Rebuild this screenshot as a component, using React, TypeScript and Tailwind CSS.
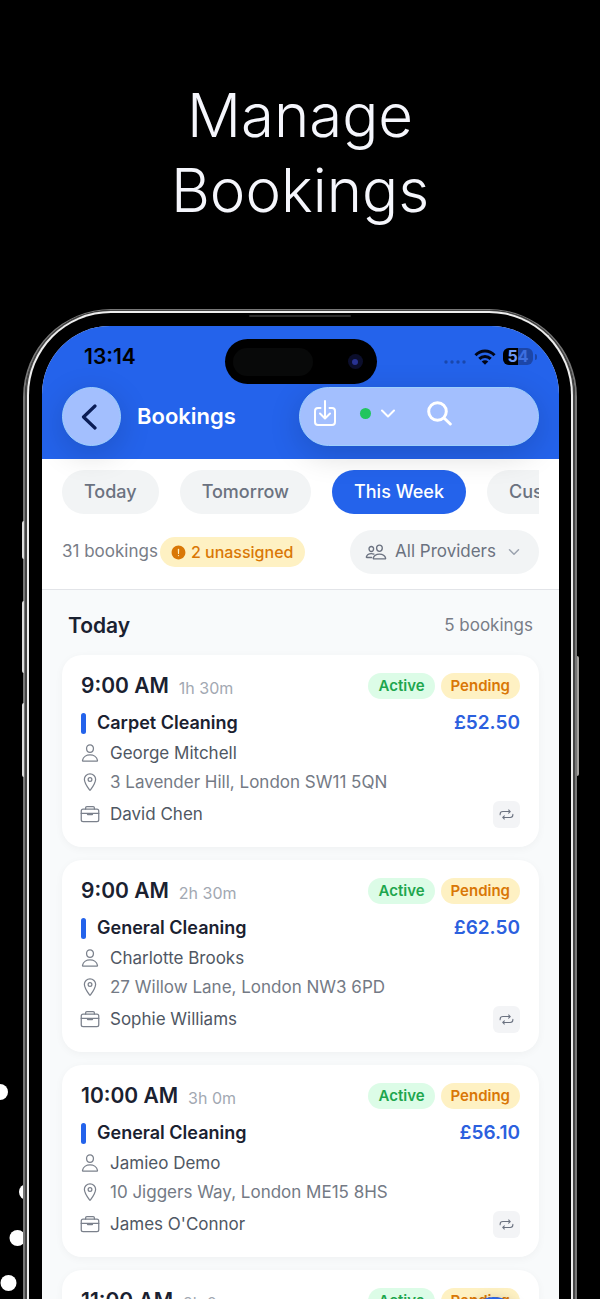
import React from 'react';
import {
  IoAlertCircle,
  IoBriefcaseOutline,
  IoChevronDownOutline,
  IoLocationOutline,
  IoPeopleOutline,
  IoPersonOutline,
  IoRepeatOutline,
} from 'react-icons/io5';

const tabs = ['Today', 'Tomorrow', 'This Week', 'Custom'];

const bookings = [
  { time: '9:00 AM', duration: '1h 30m', service: 'Carpet Cleaning', price: '£52.50', client: 'George Mitchell', address: '3 Lavender Hill, London SW11 5QN', provider: 'David Chen' },
  { time: '9:00 AM', duration: '2h 30m', service: 'General Cleaning', price: '£62.50', client: 'Charlotte Brooks', address: '27 Willow Lane, London NW3 6PD', provider: 'Sophie Williams' },
  { time: '10:00 AM', duration: '3h 0m', service: 'General Cleaning', price: '£56.10', client: 'Jamieo Demo', address: '10 Jiggers Way, London ME15 8HS', provider: "James O'Connor" },
  { time: '11:00 AM', duration: '2h 0m', service: 'Deep Cleaning', price: '£48.00', client: 'Oliver Grant', address: '8 Park Road, London SE1 4TR', provider: 'David Chen' },
];

type Booking = (typeof bookings)[number];

const StatusBar = () => (
  <div className="h-[61px] pl-[42px] pr-[22px] flex items-center justify-between">
    <span className="text-[21px] font-semibold text-black">13:14</span>
    <div className="flex items-center">
      <svg width="22" height="16" viewBox="0 0 22 16" className="mr-2" fill="#0b1d4d" fillOpacity="0.4">
        <circle cx="2" cy="13" r="1.700" />
        <circle cx="8" cy="13" r="1.700" />
        <circle cx="14" cy="13" r="1.700" />
        <circle cx="20" cy="13" r="1.700" />
      </svg>
      <svg width="22" height="16" viewBox="0 0 22 16" className="mr-[7px]" fill="none" stroke="#020617" strokeWidth="3">
        <path d="M1.500 6.200C6.800.6 15.200.6 20.500 6.200" />
        <path d="M5.300 9.900c3.200-3.200 8.200-3.200 11.400 0" />
        <path d="M11 15.800 7.700 12.400c1.900-1.700 4.700-1.700 6.600 0z" fill="#020617" stroke="none" />
      </svg>
      <div className="relative w-[30px] h-[17px] rounded-md bg-[#1c46a8] overflow-hidden text-base font-bold leading-[17px] text-center">
        <div className="absolute inset-y-0 left-0 w-1/2 bg-black"></div>
        <span className="relative text-[#6f9bfa]">5</span>
        <span className="relative text-[#3d6fe0]">4</span>
      </div>
      <div className="ml-0.5 w-0.5 h-1.5 rounded-r-full bg-[#1c46a8]"></div>
    </div>
  </div>
);

const AppBar = () => (
  <div className="px-5 pb-[13px] flex items-center">
    <button aria-label="Back" className="w-[59px] h-[59px] rounded-full bg-[#a3bffe] border border-[#9fd0fb] shadow-[0_8px_32px_rgba(0,0,0,0.16)] flex items-center justify-center">
      <svg width="16" height="26" viewBox="0 0 16 26" fill="none" stroke="#0a1c55" strokeWidth="3.200" strokeLinecap="round" strokeLinejoin="round" className="mr-1.5">
        <path d="M14 2 2.500 13 14 24" />
      </svg>
    </button>
    <h2 className="ml-4 text-[22px] font-semibold text-white">Bookings</h2>
    <div className="ml-auto w-60 h-[59px] pl-[14px] pb-[7px] rounded-full bg-[#a3bffe] border border-[#9fd0fb] shadow-[0_8px_32px_rgba(0,0,0,0.16)] flex items-center text-white">
      <button aria-label="Export">
        <svg width="22" height="28" viewBox="0 0 22 28" fill="none" stroke="currentColor" strokeWidth="2" strokeLinecap="round" strokeLinejoin="round">
          <path d="M6.500 9H4a3 3 0 0 0-3 3v11a3 3 0 0 0 3 3h14a3 3 0 0 0 3-3V12a3 3 0 0 0-3-3h-2.500" />
          <path d="M11 2v17M6 14.500l5 5 5-5" />
        </svg>
      </button>
      <button aria-label="Status filter" className="ml-6 flex items-center gap-2.5">
        <span className="w-[11px] h-[11px] rounded-full bg-[#22c55e]"></span>
        <svg width="14" height="9" viewBox="0 0 14 9" fill="none" stroke="currentColor" strokeWidth="2" strokeLinecap="round" strokeLinejoin="round">
          <path d="m1 1.500 6 6 6-6" />
        </svg>
      </button>
      <button aria-label="Search" className="ml-8">
        <svg width="25" height="25" viewBox="0 0 25 25" fill="none" stroke="currentColor" strokeWidth="3" strokeLinecap="round">
          <circle cx="10.500" cy="10.500" r="8.800" />
          <path d="m17 17 6.300 6" />
        </svg>
      </button>
    </div>
  </div>
);

const Filters = () => (
  <div className="bg-white px-5 pt-[11px] pb-[15px] border-b border-[#e2e4e8]">
    <div className="flex gap-[21px] overflow-hidden">
      {tabs.map((tab) => (
        <button
          key={tab}
          className={`h-11 px-[22px] rounded-full shrink-0 text-lg font-medium ${tab === 'This Week' ? 'bg-[#2463eb] text-white' : 'bg-[#f2f4f5] text-[#6b7280]'}`}
        >
          {tab}
        </button>
      ))}
    </div>
    <div className="mt-4 flex items-center">
      <span className="text-[17px] text-[#787d87]">31 bookings</span>
      <button className="ml-0.5 h-[30px] pl-2.5 pr-3 rounded-full bg-[#fef1c3] text-[#d97706] text-base font-medium flex items-center gap-1">
        <IoAlertCircle size={17} />
        2 unassigned
      </button>
      <button className="ml-auto h-11 pl-[15px] pr-[17px] rounded-full bg-[#f2f4f5] text-[#6b7280] text-[17px] flex items-center">
        <IoPeopleOutline size={22} />
        <span className="ml-2 mr-2.5">All Providers</span>
        <IoChevronDownOutline size={16} className="text-[#9ca3af]" />
      </button>
    </div>
  </div>
);

const RowIcon = ({ children }: { children: React.ReactNode }) => (
  <span className="w-[18px] pb-0.5 shrink-0 flex justify-center *:shrink-0 text-[#7b818c]">{children}</span>
);

const BookingCard = ({ booking }: { booking: Booking }) => (
  <article className="bg-white rounded-[20px] px-[19px] pt-[18px] pb-[19px] shadow-[0_2px_8px_rgba(0,0,0,0.04)]">
    <div className="h-[26px] flex items-center">
      <span className="text-[21px] font-semibold text-[#1a2130]">{booking.time}</span>
      <span className="ml-2.5 pt-1 text-base text-[#a2a8b2]">{booking.duration}</span>
      <span className="ml-auto h-[26px] px-2.5 rounded-full bg-[#dcfce7] text-[#1ea64e] text-[15px] font-semibold flex items-center">Active</span>
      <span className="ml-1.5 h-[26px] px-2.5 rounded-full bg-[#fef1c3] text-[#d97706] text-[15px] font-semibold flex items-center">Pending</span>
    </div>
    <div className="mt-3 h-6 flex items-center">
      <div className="w-[5px] h-[21px] rounded-full bg-[#2463eb]"></div>
      <h4 className="ml-[11px] text-lg font-semibold text-[#1a2130]">{booking.service}</h4>
      <span className="ml-auto text-[19px] font-semibold text-[#2b60de]">{booking.price}</span>
    </div>
    <div className="mt-[7px] h-6 flex items-center gap-[11px] text-[17px] text-[#4f5763]">
      <RowIcon><IoPersonOutline size={20} /></RowIcon>
      {booking.client}
    </div>
    <div className="mt-[5px] h-6 flex items-center gap-[11px] text-[17px] text-[#747a85]">
      <RowIcon><IoLocationOutline size={20} /></RowIcon>
      {booking.address}
    </div>
    <div className="mt-1.5 h-[27px] flex items-center gap-[11px] text-[17px] text-[#4f5763]">
      <RowIcon><IoBriefcaseOutline size={20} /></RowIcon>
      {booking.provider}
      <button aria-label="Repeats" className="ml-auto w-[27px] h-[27px] rounded-md bg-[#f3f4f6] text-[#6b7280] flex items-center justify-center">
        <IoRepeatOutline size={17} />
      </button>
    </div>
  </article>
);

const Phone = () => (
  <div className="relative mx-[23px] flex-1 min-h-0 flex">
    {/* Side keys */}
    <div className="absolute -left-px top-[212px] w-0.5 h-[38px] rounded-l bg-[#dddddd]"></div>
    <div className="absolute -left-px top-[292px] w-0.5 h-[72px] rounded-l bg-[#dddddd]"></div>
    <div className="absolute -left-px top-[394px] w-0.5 h-[74px] rounded-l bg-[#dddddd]"></div>
    <div className="absolute -right-0.5 top-[347px] w-0.5 h-[120px] rounded-r bg-[#a3a19e]"></div>

    {/* Metal frame */}
    <div className="flex-1 flex min-w-0 border-x-2 border-t border-[#777777] rounded-t-[88px]">
      <div className="flex-1 flex min-w-0 border-x-2 border-t border-[#454545] bg-[#454545] rounded-t-[86px]">
        <div className="relative flex-1 flex min-w-0 border-x-2 border-t-2 border-[#eeeeee] bg-black rounded-t-[84px] pt-[13px] pl-[13px] pr-3">
          <div className="absolute top-0.5 left-1/2 -translate-x-1/2 w-[102px] h-0.5 rounded-full bg-[#2b2b2b]"></div>

          <main className="relative flex-1 min-w-0 flex flex-col overflow-hidden rounded-t-[68px] bg-[#f8fafb]">
            <header className="relative z-10 bg-[#2463eb]">
              <StatusBar />
              <AppBar />
              <div className="absolute top-[13px] left-1/2 -translate-x-1/2 w-[152px] h-[45px] rounded-full bg-black flex items-center justify-between pl-2 pr-3.5">
                <div className="w-20 h-7 rounded-full bg-[#080909]"></div>
                <div className="w-[15px] h-[15px] rounded-full bg-[#0b0e2c] flex items-center justify-center">
                  <div className="w-1.5 h-1.5 rounded-full bg-[#283291]"></div>
                </div>
              </div>
            </header>
            <Filters />
            <section className="px-5 pt-[22px]">
              <div className="px-1.5 h-7 flex items-center justify-between">
                <h3 className="text-[21px] font-semibold text-[#1a2130]">Today</h3>
                <span className="text-[17px] text-[#787d87]">5 bookings</span>
              </div>
              <div className="mt-[15px] flex flex-col gap-[13px]">
                {bookings.map((b, i) => (
                  <BookingCard key={i} booking={b} />
                ))}
              </div>
            </section>
            <button aria-label="Add booking" className="absolute right-9 -bottom-14 w-[58px] h-[58px] rounded-full bg-[#2463eb] shadow-[0_2px_14px_rgba(0,0,0,0.2)]"></button>
          </main>
        </div>
      </div>
    </div>
  </div>
);

const App = () => {
  return (
    <div className="relative h-screen overflow-hidden bg-black flex flex-col font-['Inter',sans-serif]">
      {/* Scattered dots behind the phone */}
      <svg className="absolute left-0 bottom-0" width="40" height="220" viewBox="0 0 40 220" fill="white">
        <circle cx="0" cy="13" r="8" />
        <circle cx="27" cy="113" r="8" />
        <circle cx="17.500" cy="159" r="8" />
        <circle cx="8.500" cy="204" r="8" />
      </svg>
      <h1 className="h-[309px] shrink-0 pt-[78px] text-center text-[60px] leading-[75px] font-light text-[#f5f6fc]">
        Manage
        <br />
        Bookings
      </h1>
      <Phone />
    </div>
  );
};

export default App;
